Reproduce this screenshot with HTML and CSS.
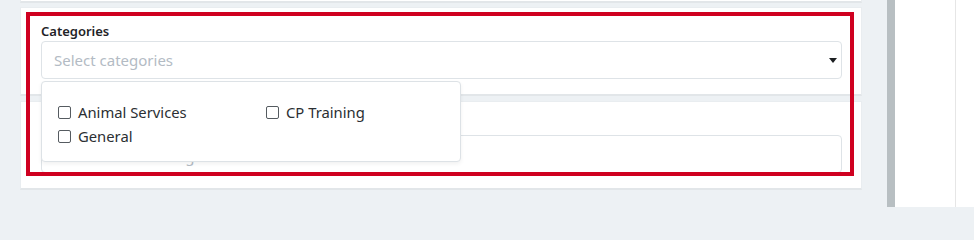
FILE: index.html
```html
<!DOCTYPE html>
<html lang="en">
<head>
<meta charset="utf-8">
<title>Categories</title>
<link rel="stylesheet" href="styles.css">
</head>
<body>
<div class="page">
  <main class="main">
    <div class="card card-top"></div>
    <section class="card">
      <label class="field-label">Categories</label>
      <div class="select-wrap">
        <div class="select">
          <span class="placeholder">Select categories</span>
          <span class="caret"></span>
        </div>
        <div class="menu">
          <label class="option"><span class="box"></span>Animal Services</label>
          <label class="option"><span class="box"></span>CP Training</label>
          <label class="option"><span class="box"></span>General</label>
        </div>
      </div>
    </section>
    <section class="card">
      <div class="label-space"></div>
      <div class="input"><span class="placeholder placeholder-low">Notification message</span></div>
    </section>
  </main>
  <div class="scrollbar"></div>
  <aside class="side"><div class="side-inner"></div></aside>
</div>
<div class="highlight"></div>
</body>
</html>
```

FILE: styles.css
```css
html, body {
  margin: 0;
  padding: 0;
}
body {
  width: 974px;
  height: 207px;
  overflow: hidden;
  position: relative;
  font-family: "Noto Sans", "Open Sans", sans-serif;
  color: #212529;
  background: #edf1f4;
}
.page {
  display: flex;
  height: 207px;
}
.main {
  width: 887px;
  box-sizing: border-box;
  padding: 0 25px 0 20px;
  background: #edf1f4;
  display: flex;
  flex-direction: column;
  gap: 5px;
}
.card {
  background: #fff;
  border: 1px solid #e9edf0;
  border-bottom: 2px solid #e2e6e9;
  padding: 14px 19px 15px 20px;
  position: relative;
}
.card-top {
  height: 1px;
  padding: 0;
  border-top: 0;
  margin-bottom: -1px;
}
.field-label {
  display: block;
  font-size: 13px;
  font-weight: 600;
  line-height: 19px;
  color: #1f2327;
}
.label-space {
  height: 19px;
}
.select-wrap {
  position: relative;
}
.select, .input {
  height: 38px;
  box-sizing: border-box;
  border: 1px solid #dee3e7;
  border-radius: 4px;
  display: flex;
  align-items: center;
  padding: 0 12px;
  background: #fff;
}
.placeholder {
  font-size: 15px;
  color: #b3bbc4;
  flex: 1;
}
.placeholder-low {
  padding-top: 4px;
}
.caret {
  width: 0;
  height: 0;
  border-left: 4.5px solid transparent;
  border-right: 4.5px solid transparent;
  border-top: 5px solid #1c1f22;
  margin-right: -8px;
  margin-top: 1px;
}
.menu {
  position: absolute;
  left: 0;
  top: 40px;
  width: 420px;
  height: 81px;
  box-sizing: border-box;
  background: #fff;
  border: 1px solid #dde2e6;
  border-radius: 4px;
  box-shadow: 0 2px 4px rgba(0, 0, 0, 0.06);
  padding: 18px 0 0 16px;
  display: grid;
  grid-template-columns: 208px 1fr;
  grid-auto-rows: 24px;
  align-content: start;
  z-index: 2;
}
.option {
  display: flex;
  align-items: center;
  gap: 7px;
  font-size: 14.8px;
  color: #2b2f33;
}
.box {
  width: 13px;
  height: 13px;
  box-sizing: border-box;
  border: 1px solid #555b60;
  border-radius: 2px;
  background: #fff;
  flex: none;
}
.scrollbar {
  width: 8px;
  background: #b8bfc2;
}
.side {
  flex: 1;
  background: #fff;
}
.side-inner {
  width: 60px;
  height: 100%;
  border-right: 1px solid #e6e6e6;
}
.highlight {
  position: absolute;
  left: 26px;
  top: 12px;
  width: 828px;
  height: 164px;
  box-sizing: border-box;
  border: 4px solid #cf0020;
  z-index: 5;
  pointer-events: none;
}
```
